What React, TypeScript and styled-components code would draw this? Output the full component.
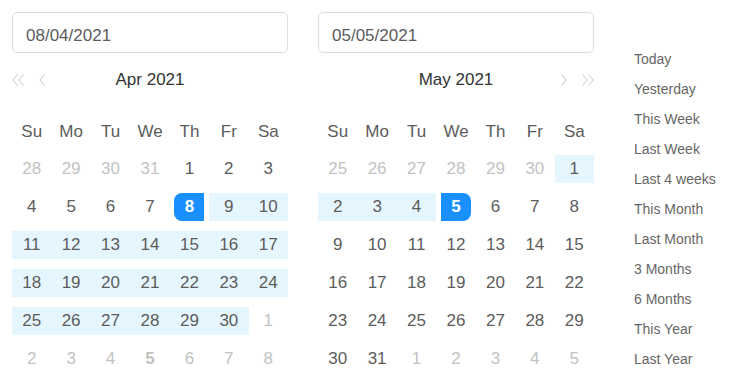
import React from 'react';
import styled, { createGlobalStyle, css } from 'styled-components';

const GlobalStyle = createGlobalStyle`
  body {
    margin: 0;
    background: #fff;
    font-family: "Liberation Sans", Arial, sans-serif;
  }
`;

type DayKind = 'muted' | 'normal';
type Day = {
  n: number;
  kind: DayKind;
  inRange?: boolean;
  selected?: 'start' | 'end';
  today?: boolean;
};

const Page = styled.div`
  display: flex;
  align-items: flex-start;
  padding: 12px;
`;

const Panel = styled.div<{ gap: number }>`
  display: flex;
  flex-direction: column;
  width: 276px;
  margin-right: ${props => props.gap}px;
`;

const DateInput = styled.div`
  box-sizing: border-box;
  height: 41px;
  border: 1px solid #dedede;
  border-radius: 5px;
  padding: 6px 0 0 13px;
  display: flex;
  align-items: center;
  font-size: 17px;
  color: #5c5c5c;
`;

const Nav = styled.div`
  display: grid;
  grid-template-columns: 1fr auto 1fr;
  align-items: center;
  height: 28px;
  margin-top: 13px;
`;

const NavSide = styled.div<{ align: 'left' | 'right' }>`
  display: flex;
  align-items: center;
  justify-content: ${props => (props.align === 'left' ? 'flex-start' : 'flex-end')};
  gap: 15px;
  color: #c4c4c4;
`;

const MonthTitle = styled.div`
  font-size: 17px;
  color: #333;
`;

const Grid = styled.div`
  display: grid;
  grid-template-columns: repeat(7, 1fr);
  grid-auto-rows: 38px;
  margin-top: 18px;
`;

const WeekDay = styled.div`
  display: flex;
  align-items: center;
  justify-content: center;
  padding-top: 2px;
  font-size: 17px;
  color: #5c5c5c;
`;

const Cell = styled.div`
  display: flex;
  align-items: center;
  justify-content: center;
`;

const Band = styled.div<{ active: boolean }>`
  width: 100%;
  height: 28px;
  display: flex;
  align-items: center;
  justify-content: center;
  background: ${props => (props.active ? '#e6f6ff' : 'transparent')};
`;

const DayNum = styled.span<{ kind: DayKind; selected?: 'start' | 'end'; today?: boolean }>`
  display: flex;
  align-items: center;
  justify-content: center;
  width: 30px;
  height: 28px;
  font-size: 17px;
  color: ${props => (props.kind === 'muted' ? '#c2c2c2' : '#5c5c5c')};
  font-weight: ${props => (props.today ? 700 : 400)};
  ${props =>
    props.selected &&
    css`
      background: #1890ff;
      color: #fff;
      font-weight: 700;
      border-radius: ${props.selected === 'start' ? '8px 0 0 8px' : '0 8px 8px 0'};
    `}
`;

const Shortcuts = styled.ul`
  list-style: none;
  margin: 0;
  padding: 32px 0 0 10px;
`;

const Shortcut = styled.li`
  height: 30px;
  line-height: 30px;
  font-size: 14px;
  color: #666;
  cursor: pointer;
`;

const Chevron = ({ dir }: { dir: 'left' | 'right' }) => (
  <svg width="6" height="12" viewBox="0 0 6 12">
    <polyline
      points={dir === 'left' ? '5.5,0.5 0.8,6 5.5,11.5' : '0.5,0.5 5.2,6 0.5,11.5'}
      fill="none"
      stroke="currentColor"
      strokeWidth="1"
    />
  </svg>
);

const DoubleChevron = ({ dir }: { dir: 'left' | 'right' }) => (
  <svg width="12" height="12" viewBox="0 0 12 12">
    {[0, 6].map(o => (
      <polyline
        key={o}
        points={
          dir === 'left'
            ? `${o + 5.5},0.5 ${o + 0.8},6 ${o + 5.5},11.5`
            : `${o + 0.5},0.5 ${o + 5.2},6 ${o + 0.5},11.5`
        }
        fill="none"
        stroke="currentColor"
        strokeWidth="1"
      />
    ))}
  </svg>
);

const weekDays = ['Su', 'Mo', 'Tu', 'We', 'Th', 'Fr', 'Sa'];

const build = (
  prevFrom: number,
  prevTo: number,
  count: number,
  nextTo: number,
  opts: (n: number) => Partial<Day>,
  nextToday?: number
): Day[] => {
  const days: Day[] = [];
  for (let n = prevFrom; n <= prevTo; n++) days.push({ n, kind: 'muted' });
  for (let n = 1; n <= count; n++) days.push({ n, kind: 'normal', ...opts(n) });
  for (let n = 1; n <= nextTo; n++) days.push({ n, kind: 'muted', today: n === nextToday });
  return days;
};

const april = build(
  28,
  31,
  30,
  8,
  n => ({ inRange: n > 8, selected: n === 8 ? 'start' : undefined }),
  5
);

const may = build(25, 30, 31, 5, n => ({
  inRange: n < 5,
  selected: n === 5 ? 'end' : undefined,
}));

const shortcuts = [
  'Today',
  'Yesterday',
  'This Week',
  'Last Week',
  'Last 4 weeks',
  'This Month',
  'Last Month',
  '3 Months',
  '6 Months',
  'This Year',
  'Last Year',
];

const Month = ({ days }: { days: Day[] }) => (
  <Grid>
    {weekDays.map(d => (
      <WeekDay key={d}>{d}</WeekDay>
    ))}
    {days.map((d, i) => (
      <Cell key={i}>
        <Band active={!!d.inRange}>
          <DayNum kind={d.kind} selected={d.selected} today={d.today}>
            {d.n}
          </DayNum>
        </Band>
      </Cell>
    ))}
  </Grid>
);

export default function App() {
  return (
    <>
      <GlobalStyle />
      <Page>
        <Panel gap={30}>
          <DateInput>08/04/2021</DateInput>
          <Nav>
            <NavSide align="left">
              <DoubleChevron dir="left" />
              <Chevron dir="left" />
            </NavSide>
            <MonthTitle>Apr 2021</MonthTitle>
            <NavSide align="right" />
          </Nav>
          <Month days={april} />
        </Panel>
        <Panel gap={30}>
          <DateInput>05/05/2021</DateInput>
          <Nav>
            <NavSide align="left" />
            <MonthTitle>May 2021</MonthTitle>
            <NavSide align="right">
              <Chevron dir="right" />
              <DoubleChevron dir="right" />
            </NavSide>
          </Nav>
          <Month days={may} />
        </Panel>
        <Shortcuts>
          {shortcuts.map(s => (
            <Shortcut key={s}>{s}</Shortcut>
          ))}
        </Shortcuts>
      </Page>
    </>
  );
}
